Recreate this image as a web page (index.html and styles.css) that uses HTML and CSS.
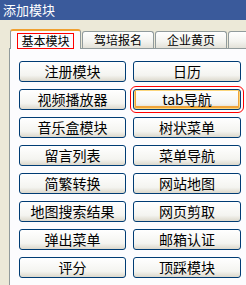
FILE: index.html
```html
<!DOCTYPE html>
<html lang="zh">

<head>
    <meta charset="utf-8">
    <title>添加模块</title>
    <link rel="stylesheet" href="styles.css">
</head>

<body>
    <div class="titel">添加模块</div>
    <nav class="faner">
        <div class="fane aktiv"><span class="markeret">基本模块</span></div>
        <div class="fane">驾培报名</div>
        <div class="fane">企业黄页</div>
        <div class="fane">不常用</div>
    </nav>
    <section class="panel">
        <button>注册模块</button>
        <button>日历</button>
        <button>视频播放器</button>
        <button class="valgt">tab导航</button>
        <button>音乐盒模块</button>
        <button>树状菜单</button>
        <button>留言列表</button>
        <button>菜单导航</button>
        <button>简繁转换</button>
        <button>网站地图</button>
        <button>地图搜索结果</button>
        <button>网页剪取</button>
        <button>弹出菜单</button>
        <button>邮箱认证</button>
        <button>评分</button>
        <button>顶踩模块</button>
    </section>
</body>

</html>
```

FILE: styles.css
```css
* {
    margin: 0;
    padding: 0;
    box-sizing: border-box;
}

body {
    width: 246px;
    height: 285px;
    overflow: hidden;
    background-color: #ece9d8;
    font-family: "Noto Sans CJK SC", sans-serif;
}

.titel {
    height: 20px;
    line-height: 20px;
    padding-left: 3px;
    background-color: #3a5a9b;
    color: #fff;
    font-size: 13px;
}

.faner {
    display: flex;
    align-items: flex-end;
    padding: 9px 0 0 10px;
    white-space: nowrap;
}

.fane {
    flex: none;
    width: 72px;
    height: 17px;
    margin-right: 1px;
    font-size: 12px;
    line-height: 15px;
    text-align: center;
    background: linear-gradient(#fff, #f3f3ef 60%, #e3e1d8);
    border: 1px solid #919b9c;
    border-bottom: none;
    border-radius: 3px 3px 0 0;
}

.aktiv {
    width: 71px;
    height: 20px;
    margin-bottom: -1px;
    margin-right: 1px;
    padding-top: 2px;
    background: #fcfcfe;
    border-top: 2px solid #f0a030;
    position: relative;
}

.markeret {
    display: inline-block;
    border: 1px solid #f00;
    padding: 0 3px;
    line-height: 14px;
}

.panel {
    display: grid;
    grid-template-columns: 107px 108px;
    grid-auto-rows: 21px;
    column-gap: 7px;
    row-gap: 7px;
    margin-left: 9px;
    height: 240px;
    padding: 12px 0 0 9px;
    background-color: #fcfcfe;
    border-top: 1px solid #919b9c;
    border-left: 1px solid #919b9c;
}

button {
    font-family: "Noto Sans CJK SC", sans-serif;
    font-size: 14px;
    line-height: 17px;
    color: #000;
    background: linear-gradient(#fff, #f4f4f0 70%, #dcd8cc);
    border: 1px solid #003c74;
    border-radius: 3px;
}

.valgt {
    box-shadow: inset 0 0 0 1px #fbd67c, inset 0 -1px 0 2px #f0a43a;
    outline: 1px solid #f00;
    outline-offset: 2px;
}
```
